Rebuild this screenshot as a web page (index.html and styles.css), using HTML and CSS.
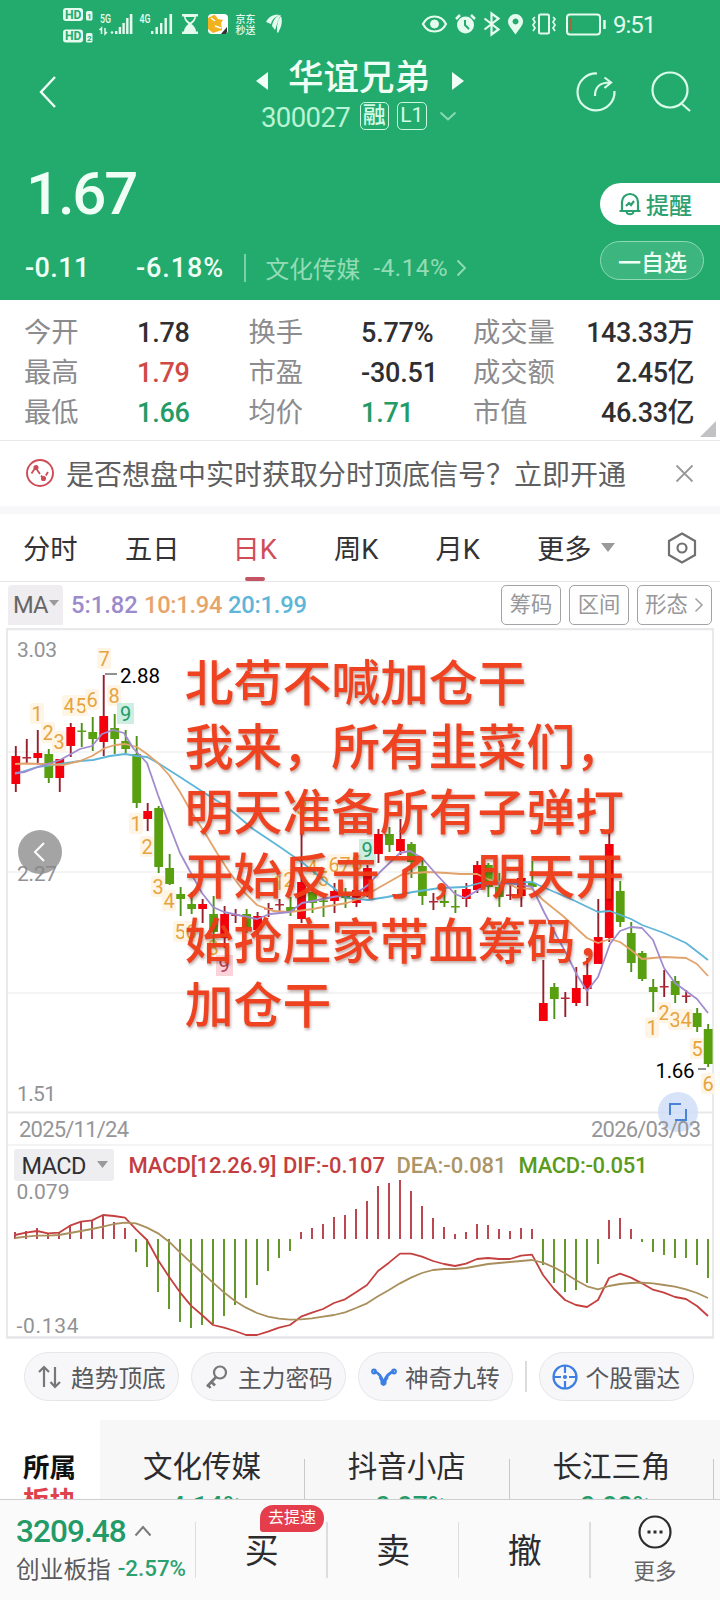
FILE: index.html
```html
<!DOCTYPE html>
<html lang="zh-CN">
<head>
<meta charset="utf-8">
<title>华谊兄弟 300027</title>
<link rel="stylesheet" href="styles.css">
</head>
<body>
<div class="app">
  <header class="hero">
    <div class="status">
      <svg class="status-left" width="226" height="48" viewBox="60 0 226 48">
        <g fill="#e4fbee">
          <rect x="63" y="8" width="20" height="13" rx="3"/><rect x="86" y="11" width="6.500" height="9.500" rx="1.500"/>
          <rect x="63" y="29.500" width="20" height="13" rx="3"/><rect x="86" y="33" width="6.500" height="9.500" rx="1.500"/>
          <path d="M115 31h2.400v3H115zM118.700 27h2.400v7h-2.400zM122.400 23h2.400v11h-2.400zM126.100 18h2.400v16h-2.400zM129.800 14h2.600v20h-2.600z"/>
          <path d="M151 31h2.400v3H151zM155.500 27h2.400v7h-2.400zM160 23h2.400v11H160zM164.500 18h2.400v16h-2.400zM169.500 14h2.600v20h-2.600z"/>
          <path d="M182 14h16v2.500h-2c0 3-2 5.500-4.500 7.500 2.500 2 4.500 4.500 4.500 7.500h2V34h-16v-2.500h2c0-3 2-5.500 4.500-7.500-2.500-2-4.500-4.500-4.500-7.500h-2z"/>
          <rect x="208" y="14" width="20" height="20" rx="4" fill="#fff"/>
          <path d="M266 22c3-6 8-8 14-7-6 2-8 5-9 9zM272 26c1-6 4-10 9-11-4 6-4 11-6 15zM277 32c0-6 0-11 4-16 2 6 0 12-3 17z"/>
        </g>
        <path d="M185.500 17h9c-.5 2.500-2.500 4.500-4.500 5.500-2-1-4-3-4.500-5.500z" fill="#23ab6e"/>
        <path d="M208 18c3-1 4-3 7-3l3 4 5 1-2 3 1 7-9 3-5-4z" fill="#f0b21f"/><path d="M211 18l4 3M215 26l6 2" stroke="#fff" stroke-width="1.500"/><path d="M221 34l6-7v5l-1 2z" fill="#333"/>
        <path d="M101.500 34v-6l-2 2M105 28v6l2-2" fill="none" stroke="#e4fbee" stroke-width="1.500"/>
        <circle cx="112" cy="32.500" r="1.300" fill="#e4fbee"/>
        <g font-family="Roboto, sans-serif" font-weight="700" fill="#23ab6e">
          <text x="65" y="18.900" font-size="12.500" textLength="16.500" lengthAdjust="spacingAndGlyphs">HD</text><text x="65" y="40.400" font-size="12.500" textLength="16.500" lengthAdjust="spacingAndGlyphs">HD</text>
          <text x="87" y="19" font-size="8">1</text><text x="87" y="41" font-size="8">2</text>
        </g>
        <g fill="#e4fbee" font-weight="500"><text x="100" y="22.500" font-size="12" textLength="11" lengthAdjust="spacingAndGlyphs" font-family="Roboto, sans-serif">5G</text><text x="139.500" y="22.500" font-size="12" textLength="11" lengthAdjust="spacingAndGlyphs" font-family="Roboto, sans-serif">4G</text>
        <text x="235.500" y="22.500" font-size="10" font-family="Noto Sans CJK SC, sans-serif">京东</text><text x="235.500" y="33.500" font-size="10" font-family="Noto Sans CJK SC, sans-serif">秒送</text></g>
      </svg>
      <svg class="status-right" width="186" height="48" viewBox="420 0 186 48" fill="none" stroke="#e4fbee">
        <path d="M423 24c5-10 18-10 23 0-5 10-18 10-23 0z" stroke-width="2.200"/><circle cx="434.500" cy="24" r="4" fill="#e4fbee"/>
        <circle cx="465.500" cy="25" r="8.500" fill="#e4fbee" stroke="none"/><path d="M465 20v5l4 4" stroke="#23ab6e" stroke-width="2"/><path d="M456 19l4-4M471 15l4 4" stroke-width="2.500"/>
        <path d="M484.500 18.500l14 11-7 5V13.500l7 5-14 11" stroke-width="2.200"/>
        <path d="M515.500 34.500c-4-6-7.500-9-7.500-13a7.500 7.500 0 0 1 15 0c0 4-3.500 7-7.500 13zM515.500 18.500a3 3 0 1 0 .1 0z" fill="#e4fbee" fill-rule="evenodd" stroke="none"/>
        <rect x="539" y="14.500" width="10" height="19" rx="1.500" stroke-width="2"/><path d="M535 17l-2 2 2 3-2 3 2 3-2 3M553 17l2 2-2 3 2 3-2 3 2 3" stroke-width="1.700"/>
        <rect x="567" y="14.500" width="33" height="20" rx="3" stroke-width="2"/><path d="M570.500 18v13" stroke="#a2673f" stroke-width="2.500"/><path d="M604.500 20v9" stroke-width="2.500"/>
      </svg>
      <span class="clock">9:51</span>
    </div>
    <div class="titlebar">
      <svg class="back" width="20" height="34" viewBox="0 0 20 34"><path d="M17 2 3 17l14 15"/></svg>
      <div class="title-block">
        <div class="title-row"><i class="tri tri-left"></i><h1>华谊兄弟</h1><i class="tri tri-right"></i></div>
        <div class="code-row"><span class="code">300027</span><b class="tag">融</b><b class="tag tag-level">L1</b>
          <svg width="18" height="10" viewBox="0 0 18 10"><path d="M1.500 1.500 9 8.500l7.500-7"/></svg></div>
      </div>
      <svg class="tool" width="44" height="44" viewBox="574 70 44 44"><path d="M597 73.500a18.500 18.500 0 1 0 17.500 17.500M595 96c0-9 4-13.500 15-13.500M604.500 77.500l6.500 5-6.500 5.500"/></svg>
      <svg class="tool search" width="44" height="44" viewBox="650 70 44 44"><circle cx="670" cy="90" r="17.500"/><path d="M682 104l8 7"/></svg>
    </div>
    <div class="quote">
      <div class="quote-main">
        <div class="price">1.67</div>
        <div class="change-row"><span class="chg">-0.11</span><span class="pct">-6.18%</span><i class="vline"></i><span class="ind">文化传媒</span><span class="ind-pct">-4.14%</span>
          <svg width="11" height="18" viewBox="0 0 11 18"><path d="M1.500 1.500 9 9l-7.500 7.500"/></svg></div>
      </div>
      <div class="quote-side">
        <div class="pill alert"><svg width="22" height="24" viewBox="0 0 22 24"><path d="M.5 19h21M3 19V10a8 8 0 0 1 16 0v9M7.500 20c1 3 6 3 7 0M7 14l3-3 2 2 3-4"/></svg>提醒</div>
        <div class="pill watch">一自选</div>
      </div>
    </div>
  </header>

  <section class="stats">
    <span class="k">今开</span><span class="v">1.78</span><span class="k">换手</span><span class="v">5.77%</span><span class="k">成交量</span><span class="v end">143.33万</span>
    <span class="k">最高</span><span class="v up">1.79</span><span class="k">市盈</span><span class="v">-30.51</span><span class="k">成交额</span><span class="v end">2.45亿</span>
    <span class="k">最低</span><span class="v down">1.66</span><span class="k">均价</span><span class="v down">1.71</span><span class="k">市值</span><span class="v end">46.33亿</span>
    <i class="corner"></i>
  </section>

  <section class="banner">
    <svg width="30" height="30" viewBox="0 0 30 30" fill="none" stroke="#cf4a57" stroke-width="1.900"><circle cx="15" cy="15" r="13"/><path d="M6.500 15.500l4-6 8 11.500 4.500-7" stroke-width="1.800" stroke-dasharray="6.500 2"/><circle cx="11" cy="9.500" r="1.600" fill="#cf4a57"/><circle cx="18.500" cy="20.500" r="1.600" fill="#cf4a57"/></svg>
    <span>是否想盘中实时获取分时顶底信号？立即开通</span>
    <svg class="close" width="19" height="19" viewBox="0 0 19 19"><path d="M1.500 1.500l16 16M17.500 1.500l-16 16"/></svg>
  </section>

  <nav class="tabs">
    <span class="t1">分时</span><span class="t2">五日</span><span class="t3 active">日K</span><span class="t4">周K</span><span class="t5">月K</span><span class="t6">更多</span><i class="caret"></i>
    <svg width="30" height="32" viewBox="0 0 30 32"><path d="M15 1.500 28 9v14L15 30.500 2 23V9z"/><circle cx="15" cy="16" r="4.500"/></svg>
  </nav>

  <section class="ma-row">
    <span class="ma-select">MA<i class="caret small"></i></span>
    <span class="ma5">5:1.82</span><span class="ma10">10:1.94</span><span class="ma20">20:1.99</span>
    <button class="b1">筹码</button><button class="b2">区间</button><button class="b3">形态<svg width="10" height="16" viewBox="0 0 10 16"><path d="M1.500 1.500 8 8l-6.500 6.500"/></svg></button>
  </section>

  <section class="chart">
    <svg id="chart" width="720" height="712" viewBox="0 628 720 712"></svg>
    <p class="note">北苟不喊加仓干<br>我来，所有韭菜们，<br>明天准备所有子弹打<br>开始反击了，明天开<br>始抢庄家带血筹码，<br>加仓干</p>
  </section>

  <section class="chips">
    <div class="chip"><svg width="26" height="26" viewBox="0 0 26 26"><path d="M7 23V3M2 8l5-5 5 5M18 3v20M13.500 18l4.500 5 5-5"/></svg>趋势顶底</div>
    <div class="chip"><svg width="26" height="26" viewBox="0 0 26 26"><circle cx="16" cy="8.500" r="6"/><path d="M12 13 3 22.500M7 17.500l4 4M4 21l2.500 3" stroke-width="2.600"/></svg>主力密码</div>
    <div class="chip"><svg class="blue" width="26" height="26" viewBox="0 0 26 26"><path d="M3 7.500c5 1 7 5 9.500 11 2.500-6 5-10 10.500-11" stroke-width="2.800"/><path d="M9 13l3.500 6 4-6" stroke-width="3"/><circle cx="3" cy="7.500" r="1.800"/><circle cx="23" cy="7.500" r="1.800"/><circle cx="12.500" cy="18.500" r="2"/></svg>神奇九转</div>
    <i class="chip-line"></i>
    <div class="chip"><svg class="blue" width="26" height="26" viewBox="0 0 26 26"><circle cx="13" cy="13" r="11.500"/><path d="M13 1v8M13 17v8M1 13h8M17 13h8"/><circle cx="13" cy="13" r="1"/></svg>个股雷达</div>
  </section>

  <section class="plates">
    <div class="plate-label">所属<br><em>板块</em></div>
    <div class="plate"><b>文化传媒</b><span>-4.14%</span></div>
    <div class="plate"><b>抖音小店</b><span>-0.97%</span></div>
    <div class="plate"><b>长江三角</b><span>-0.98%</span></div>
    <div class="plate-rest"></div>
  </section>

  <footer class="bottom">
    <div class="index">
      <div class="index-value">3209.48<svg width="18" height="12" viewBox="0 0 18 12"><path d="M1.500 10.500 9 2l7.500 8.500"/></svg></div>
      <div class="index-name">创业板指<span>-2.57%</span></div>
    </div>
    <div class="act">买<em class="badge">去提速</em></div>
    <div class="act">卖</div>
    <div class="act">撤</div>
    <div class="act more"><svg width="36" height="36" viewBox="0 0 36 36"><circle cx="18" cy="18" r="15.500"/><path d="M10.500 18h3M16.500 18h3M22.500 18h3" stroke-width="3"/></svg>更多</div>
  </footer>
</div>
<script src="chart.js"></script>
</body>
</html>
```
FILE: styles.css
```css
* { box-sizing: border-box; }
body { margin: 0; background: #fff; font-family: Roboto, "Noto Sans CJK SC", sans-serif; color: #333; }
i, em { font-style: normal; }
svg { display: block; flex: none; }
.app { width: 720px; height: 1600px; overflow: hidden; display: flex; flex-direction: column; }
.app > * { flex: none; }

.hero { height: 300px; background: #23ab6e; color: #effff6; }
.status { height: 48px; display: flex; align-items: center; padding-left: 60px; }
.status-right { margin-left: 134px; }
.clock { margin: 1px 0 0 7px; font-size: 24px; letter-spacing: -1px; color: #e4fbee; }
.titlebar { height: 92px; display: flex; align-items: flex-start; }
.back { margin: 27px 0 0 38px; fill: none; stroke: #effff6; stroke-width: 2.4; }
.title-block { margin-left: 198px; width: 216px; }
.title-row { display: flex; align-items: center; height: 60px; }
h1 { margin: 0 21px 0 20px; width: 143px; font-size: 35.500px; font-weight: 500; line-height: 60px; white-space: nowrap; }
.tri { border: solid transparent; border-width: 9px 0; margin-top: 5px; }
.tri-left { border-right: 12.500px solid #effff6; }
.tri-right { border-left: 12.500px solid #effff6; }
.code-row { display: flex; align-items: center; height: 26px; margin-top: -5px; padding-left: 5px; color: #b9f4d4; }
.code { width: 98.500px; font-size: 27.500px; letter-spacing: -.6px; padding-top: 2px; }
.tag { width: 29.500px; height: 28px; border: 1.500px solid #c9f8de; border-radius: 5px; font-size: 23px; line-height: 25px; text-align: center; font-weight: 500; color: #d5fbe6; margin-right: 8px; }
.tag-level { font-size: 21px; margin-right: 12px; font-weight: 400; }
.code-row svg { fill: none; stroke: #8adbb3; stroke-width: 1.800; }
.tool { margin: 22px 0 0 102px; fill: none; stroke: #d9fbe9; stroke-width: 2.200; }
.search { margin-left: 32px; }
.quote { height: 160px; display: flex; justify-content: space-between; }
.quote-main { padding-left: 25px; }
.price { height: 103px; padding: 18px 0 0 1px; font-size: 60px; font-weight: 500; line-height: 71px; letter-spacing: -2.200px; }
.change-row { display: flex; align-items: center; height: 49px; }
.chg { width: 111px; font-size: 27px; font-weight: 500; letter-spacing: .4px; }
.pct { width: 108px; font-size: 27px; font-weight: 500; letter-spacing: .9px; }
.vline { width: 1.500px; height: 28px; background: #7bd0a8; margin-right: 20px; }
.ind { width: 108px; font-size: 23.700px; color: #93dcb6; }
.ind-pct { width: 82px; font-size: 24px; letter-spacing: .6px; color: #93dcb6; }
.change-row svg { fill: none; stroke: #93dcb6; stroke-width: 1.800; }
.quote-side { width: 120px; padding-top: 43px; }
.pill { display: flex; align-items: center; font-size: 23px; font-weight: 500; }
.alert { height: 42px; background: #fff; color: #2ca06e; border-radius: 21px 0 0 21px; padding-left: 19px; gap: 5px; }
.alert svg { fill: none; stroke: #2ca06e; stroke-width: 2.200; }
.watch { width: 104px; height: 39px; margin-top: 16px; border: 1.500px solid #8fd9b4; border-radius: 20px; background: #3cb57f; padding-left: 17px; }

.stats { position: relative; height: 141px; padding: 13px 0 0 24px; border-bottom: 1.500px solid #e8e8e9; display: grid; grid-template-columns: 113px 111.500px 112.500px 112px 102px 119px; grid-template-rows: repeat(3, 40px); align-items: center; background: #fff; font-size: 27.300px; line-height: 40px; white-space: nowrap; }
.k { color: #8c8c8e; }
.v { font-size: 27px; color: #2f2f32; font-weight: 500; letter-spacing: -.2px; }
.v.end { text-align: right; letter-spacing: -.5px; }
.v.up { color: #d04a45; }
.v.down { color: #239b66; }
.corner { position: absolute; right: 4px; bottom: 3px; border-left: 16px solid transparent; border-bottom: 16px solid #c2c2c4; }

.banner { height: 73px; padding: 0 0 1px 25px; display: flex; align-items: center; border-bottom: 8px solid #f8f7f9; font-size: 28px; color: #5f5f61; }
.banner span { margin-left: 11px; width: 609px; white-space: nowrap; }
.close { fill: none; stroke: #999; stroke-width: 1.800; }

.tabs { height: 68px; border-bottom: 1.500px solid #e6e5e7; display: flex; align-items: center; font-size: 27.300px; color: #333335; }
.tabs span { flex: none; white-space: nowrap; height: 66px; line-height: 71px; }
.t1 { margin-left: 23px; width: 102px; }
.t2 { width: 107.500px; }
.t3 { width: 101.500px; }
.t4 { width: 101.500px; }
.t5 { width: 101.500px; }
.t6 { width: 64px; }
.tabs .active { position: relative; color: #d04c57; }
.tabs .active::after { content: ""; position: absolute; left: 12px; bottom: 0; width: 20px; height: 3.500px; border-radius: 2px; background: #c25561; }
.caret { border: solid transparent; border-width: 9px 7px 0; border-top-color: #9a9a9c; }
.tabs svg { margin-left: 52px; fill: none; stroke: #717173; stroke-width: 2.200; }

.ma-row { height: 46px; padding: 3px 8px 0; display: flex; align-items: flex-start; font-size: 23.700px; line-height: 41px; white-space: nowrap; }
.ma-select { width: 55px; height: 40px; background: #efedf0; border-radius: 4px 4px 0 0; padding-left: 5px; display: flex; align-items: center; letter-spacing: -1px; color: #666; margin-right: 8px; }
.small { border-width: 6px 5px 0; margin: -4px 0 0 2px; }
.ma5, .ma10, .ma20 { font-weight: 500; }
.ma5 { width: 73px; color: #9c8bcb; }
.ma10 { width: 84px; color: #e7a468; letter-spacing: -.3px; }
.ma20 { width: 273px; color: #5db5d8; letter-spacing: -.2px; }
button { height: 40px; padding: 0; border: 1.500px solid #a3a3a6; border-radius: 5px; background: #fefefe; font: 21.300px/36px Roboto, "Noto Sans CJK SC", sans-serif; color: #97979a; display: flex; justify-content: center; align-items: center; gap: 6px; margin-right: 8px; }
.b1, .b2 { width: 60px; }
.b3 { width: 75px; margin-right: 0; }
button svg { fill: none; stroke: #a3a3a6; stroke-width: 1.600; }

.chart { position: relative; height: 712px; }
.note { position: absolute; left: 184.800px; top: 19.500px; margin: 0; font: 500 48.800px/64.600px "Noto Sans CJK SC", sans-serif; color: #ee3b17; opacity: .96; white-space: nowrap; text-shadow: 1px 2px 3px rgba(70, 20, 10, .38); }

.chips { height: 80px; padding: 12px 0 0 24px; display: flex; align-items: flex-start; }
.chip { width: 155px; height: 49px; border: 1.500px solid #e6e6e9; border-radius: 25px; background: #f7f7f9; display: flex; align-items: center; padding-left: 12px; gap: 8px; font-size: 23.700px; color: #58585b; margin-right: 12px; white-space: nowrap; }
.chip svg { fill: none; stroke: #77777a; stroke-width: 2.200; }
.chip svg.blue { stroke: #3d7fe2; }
.chip-line { width: 1.500px; height: 31px; margin: 9px 12px 0 0; background: #dcdcdf; }

.plates { height: 79px; display: flex; overflow: hidden; }
.plate-label { width: 100px; padding: 31px 0 0 23px; font-size: 26.500px; line-height: 33px; font-weight: 700; color: #111; }
.plate-label em { color: #dd424d; }
.plate { width: 204.800px; background: #f7f7f8; text-align: center; padding-top: 25px; border-right: 1.500px solid transparent; border-image: linear-gradient(#f7f7f8 50%, #c8c8ca 50%) 1; border-left: 0; border-top: 0; border-bottom: 0; }
.plate b { display: block; font-size: 29.500px; line-height: 44px; font-weight: 400; color: #2c2c2e; }
.plate span { display: block; font-size: 26.500px; line-height: 30px; margin-top: 1px; color: #239b66; font-weight: 500; }
.plate-rest { flex: 1; background: #f7f7f8; }

.bottom { height: 101px; border-top: 1.500px solid #cfcfd1; background: #fafafb; display: flex; }
.index { width: 196px; padding-left: 16px; white-space: nowrap; }
.index-value { display: flex; align-items: center; gap: 8px; height: 44px; margin-top: 9px; font-size: 31.500px; font-weight: 500; letter-spacing: -.9px; color: #239b66; }
.index-value svg { fill: none; stroke: #7a7a7d; stroke-width: 2; }
.index-name { display: flex; align-items: center; margin-top: -2px; font-size: 23.700px; color: #5b5b5e; }
.index-name span { margin-left: 7px; font-size: 22.300px; font-weight: 500; color: #2ca06e; }
.act { position: relative; width: 131.500px; height: 101px; padding-top: 26px; font-size: 34px; line-height: 50px; color: #2c2c2e; text-align: center; }
.act::before { content: ""; position: absolute; left: -1.500px; top: 22px; width: 1.500px; height: 56px; background: #dddde0; }
.badge { position: absolute; left: 64px; top: 5px; width: 64px; height: 27px; border-radius: 13px 13px 13px 3px; background: #e43e4c; color: #fff; font-size: 16px; line-height: 25px; }
.more { width: 129px; padding-top: 14px; font-size: 21.500px; line-height: 41px; color: #666; }
.more svg { margin: 0 auto 1px; fill: none; stroke: #2c2c2e; stroke-width: 2.200; }
```
FILE: chart.js
```js
// Each candle: colour, wick top, wick bottom, body top, body bottom (y).
const candles = [
  ['r',746,792,756,784],['r',739,763,757,758.5],['r',730,765,753,758],['g',749,783,754,778],
  ['r',759,792,759,778],['r',723,757,727,746],['g',723,747,730.5,732],['g',717,751,732,739],
  ['r',675,756,716,742],['g',714,754,728,739],['g',730,753,741,749],['g',736,808,754,803],
  ['r',803,831,811,819],['g',806,873,808,867],['g',854,885,868,884],['g',887,916,894,899],
  ['g',892,914,904,909],['r',899,923,904,909],['g',896,945,914,932],['r',906,948,914,938],
  ['r',909,923,914.5,916],['g',909,933,914,928],['r',912,935,916,930],['r',903,917,908,909.5],
  ['r',899,912,904,905.5],['g',897,916,907,912],['r',833,923,882,919],['g',888,913,892,903],
  ['g',897,917,900.5,902],['r',883,913,891,901],['g',888,908,893,898],['r',885,907,890,903],
  ['r',865,897,868,893],['r',829,863,834,854],['g',827,852,834,845],['r',819,855,839,851],
  ['g',842,878,844,862],['g',860,905,866,896],['r',893,910,901,902.5],['g',887,907,901,903],
  ['g',890,913,906,907.5],['r',883,907,889,899],['r',861,893,865,890],['g',863,897,865,887],
  ['g',873,907,887,897],['r',880,900,894.5,896],['r',867,907,878,896],['g',861,888,883,887],
  ['r',960,1021,1003,1021],['g',983,1019,987,999],['r',992,1017,997.5,999],['r',967,1006,988,1003],
  ['r',958,1006,975,989],['r',899,964,937,964],['r',833,942,844,938],['g',881,927,891,922],
  ['g',922,972,933,963],['g',951,981,953,979],['g',979,1012,987,992],['r',970,997,986,987.5],
  ['g',976,1003,981,995],['r',990,1003,995.5,997],['g',1008,1032,1013,1027],['g',1024,1067,1029,1064]
];
const ma = {
  '#5db5d8': '15,774 37,767 60,764 80,761 93,760 110,756 125,754 137,756 147,757 158,763 180,777 203,792 227,807 253,829 280,847 303,863 327,883 347,898 368,900 387,897 413,892 440,888 465,887 480,883 507,883 532,882 543,887 573,900 598,912 610,911 631,919 642,925 664,933 686,943 708,960',
  '#e2a36b': '15,764 25,763.5 43,764 63,765 80,761 92,756 105,748 115,745 125,744 137,747 147,754 158,763 169,775 180,792 192,813 205,833 217,853 230,873 245,893 257,905 273,911 290,912 313,909 323,907 347,903 363,897 380,887 403,874 427,872 447,873 460,874 477,874 490,880 507,883 517,888 532,889 543,900 563,916 587,938 598,943 610,939 620,942 631,950 642,959 664,957 686,958 697,964 708,976',
  '#a18bcf': '15,773 25,772 38,767 60,760 80,749 92,746 102,734 113,730 124,733 133,748 147,763 158,795 170,827 180,853 192,875 202,893 213,907 224,912 247,917 257,919 270,914 290,912 302,903 313,901 333,897 357,893 368,885 379,873 400,853 410,851 422,858 437,875 455,894 465,898 478,890 490,884 507,883 522,885 532,887 544,912 555,933 566,953 577,975 587,991 598,977 610,944 620,931 631,927 642,928 653,940 664,968 675,983 686,991 697,999 708,1013'
};
// MACD histogram ends and the two signal lines.
const bars = [1232,1231,1228,1234,1233,1225,1222,1221,1216,1222,1228,1252,1267,1292,1309,1322,1328,1325,1324,1316,1305,1298,1285,1271,1258,1251,1232,1228,1224,1217,1215,1209,1201,1186,1183,1180,1191,1206,1218,1227,1234,1232,1224,1225,1229,1231,1228,1229,1265,1283,1292,1290,1283,1264,1220,1218,1229,1242,1252,1255,1258,1258,1265,1278];
const dif = [525,518,513,520,518,497,485,481,465,468,473,508,540,600,650,697,737,765,795,803,813,825,825,815,803,795,770,758,747,729,718,697,675,633,608,581,581,590,603,612,618,611,597,594,597,597,587,584,645,687,720,735,741,720,654,641,653,670,689,698,711,717,738,768];
const dea = [534,530,527,527,525,519,513,507,500,492,488,490,503,520,545,577,608,638,668,697,723,743,759,770,776,779,778,775,770,765,757,744,730,709,690,670,653,639,630,627,627,624,618,612,609,606,603,600,608,622,640,661,679,688,678,672,669,668,670,675,680,688,699,714];
// Nine-turn counters: text, centre x, baseline.
const marks = [['1',37,721],['2',48,740],['3',59,749],['4',69,713],['5',81,713],['6',92,707],['7',104,666],['8',114,703],
  ['1',136,831],['2',147,854],['3',158,894],['4',169,908],['5',180,939],['6',191,939],['8',213,955],
  ['1',279,890],['2',289,887],['3',302,815],['4',312,875],['5',323,886],['6',334,872],['7',345,872],['8',357,870],
  ['1',652,1035],['2',664,1020],['3',675,1027],['4',686,1027],['5',697,1056],['6',708,1091]];

const out = [];
const line = (x1, y1, x2, y2, c, w) => out.push(`<path d="M${x1} ${y1}L${x2} ${y2}" stroke="${c}" stroke-width="${w}"/>`);
const rect = (x, y, w, h, c, r = 0) => out.push(`<rect x="${x}" y="${y}" width="${w}" height="${h}" rx="${r}" fill="${c}"/>`);
const text = (s, x, y, size, c, len) => out.push(`<text x="${x}" y="${y}" font-size="${size}" fill="${c}"${len ? ` textLength="${len}"` : ' text-anchor="middle"'}>${s}</text>`);
const poly = (pts, c) => out.push(`<polyline points="${pts}" fill="none" stroke="${c}" stroke-width="1.8" stroke-linejoin="round"/>`);

line(6, 629, 714, 629, '#e9e8eb', 2.5);
line(7, 629, 7, 1338, '#e9e8eb', 2);
line(713, 629, 713, 1338, '#e9e8eb', 2);
line(6, 1337.5, 714, 1337.5, '#e6e6e8', 2.5);
[752, 872, 993].forEach(y => line(8, y, 712, y, '#f1f1f2', 1.5));
line(8, 1112.5, 712, 1112.5, '#e9e9eb', 2);
line(8, 1145, 712, 1145, '#f0f0f1', 1.5);
marks.forEach(([s, x, y]) => { rect(x - 7, y - 18, 14, 21, '#fff5e6', 2); text(s, x, y, 20, '#e6a440'); });
rect(117, 703, 17, 21, '#cdeee0'); text('9', 125.5, 721, 20, '#239b66');
rect(359, 839, 17, 23, '#cdeee0'); text('9', 367, 857, 20, '#239b66');
rect(216, 955, 17, 21, '#fbd3da'); text('9', 224, 972, 20, '#b53f52');
candles.forEach(([k, a, b, c, d], i) => {
  const x = 15.8 + i * 10.99, red = k === 'r';
  line(x, a, x, b, red ? '#94202b' : '#4d9117', 1.9);
  rect(x - 4.4, c, 8.8, d - c, red ? (d - c < 2 ? '#b3293a' : '#f4000d') : '#58a010');
});
Object.keys(ma).forEach(c => poly(ma[c], c));
text('2.27', 17, 881, 21, '#929295', 40);
out.push('<circle cx="40" cy="852" r="22" fill="#858585" opacity=".75"/><path d="M44 843l-9 9 9 9" fill="none" stroke="#fff" stroke-width="2"/>');
text('3.03', 17, 657, 21, '#929295', 40);
text('1.51', 17, 1101, 21, '#929295', 39);
line(105, 674, 117, 674, '#555', 1.3);
text('2.88', 120, 682.5, 20.5, '#000', 40);
line(698, 1069, 706, 1069, '#555', 1.3);
text('1.66', 655.5, 1078, 20.5, '#000', 39);
out.push('<circle cx="678" cy="1112" r="20" fill="#ccdcf8" opacity=".8"/><path d="M670 1115v-11h11M686 1109v11h-11" fill="none" stroke="#4a83d6" stroke-width="2"/>');
text('2025/11/24', 19, 1137, 22, '#969699', 110);
text('2026/03/03', 591, 1137, 22, '#969699', 110);
rect(14, 1149, 100, 32, '#eeedef', 3);
text('MACD', 21.5, 1174, 23.5, '#303033', 65);
out.push('<path d="M97 1161h11l-5.500 7z" fill="#9a9a9c"/>');
out.push('<g font-weight="500">');
text('MACD[12.26.9]', 128.5, 1173, 22, '#c43d40', 148);
text('DIF:-0.107', 283, 1173, 22, '#c43d40', 102);
text('DEA:-0.081', 396.5, 1173, 22, '#ab9566', 110);
text('MACD:-0.051', 518.5, 1173, 22, '#5a9a1c', 129);
out.push('</g>');
text('0.079', 16.5, 1199, 21, '#929295', 53);
text('-0.134', 16.5, 1333, 21, '#929295', 62);
bars.forEach((y, i) => line(15 + i * 11, 1239, 15 + i * 11, y, y < 1239 ? '#bb4850' : '#65982a', 2));
poly(dif.map((z, i) => `${15 + i * 11},${1060 + z / 3}`).join(' '), '#c4403f');
poly(dea.map((z, i) => `${15 + i * 11},${1060 + z / 3}`).join(' '), '#a98f5c');
document.getElementById('chart').innerHTML = `<g font-family="Roboto, sans-serif">${out.join('')}</g>`;
```
